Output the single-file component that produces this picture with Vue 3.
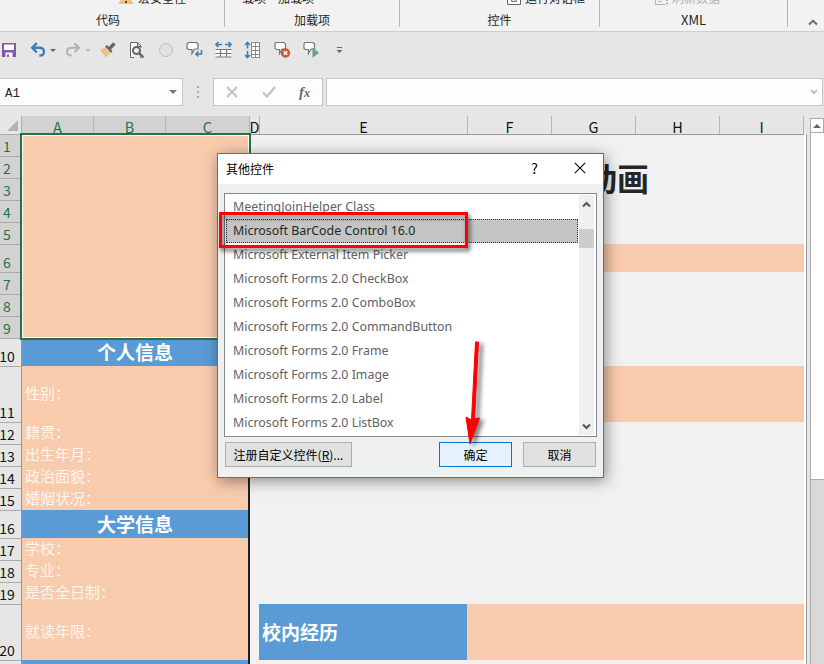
<template>
  <div class="excel">
    <div class="ribbon">
      <div class="group g-code">
        <div class="cmd-row">
          <svg width="16" height="16" viewBox="0 0 16 16"><path d="M8 1 15.500 15H.5z" fill="#ecc27c"/><path d="M7 6h2v5H7zM7 12h2v2H7z" fill="#444"/></svg>
          <span>宏安全性</span>
        </div>
        <div class="group-name">代码</div>
      </div>
      <div class="group g-addins">
        <div class="cmd-row"><span>载项</span><span>加载项</span></div>
        <div class="group-name">加载项</div>
      </div>
      <div class="group g-controls">
        <div class="cmd-row">
          <i class="tick"></i>
          <svg width="14" height="16" viewBox="0 0 14 16"><path d="M.5.5h13v15H.5z" fill="#fff" stroke="#666"/><path d="M4.500 7.500h5v5h-5z" fill="#ddd" stroke="#777"/></svg>
          <span>运行对话框</span>
        </div>
        <div class="group-name">控件</div>
      </div>
      <div class="group g-xml">
        <div class="cmd-row off">
          <svg width="14" height="16" viewBox="0 0 14 16"><path d="M10 15.500H.5V.5h10v9" fill="none" stroke="#b9b0b9"/><path d="M3 9.500h5M3 12.500h4" stroke="#c9a9c9"/><path d="M12 8v4M12 13.500v2" stroke="#b9b0b9" stroke-width="2"/></svg>
          <span>刷新数据</span>
        </div>
        <div class="group-name">XML</div>
      </div>
      <div class="collapse">
        <svg width="10" height="7" viewBox="0 0 10 7"><path d="M1 5.500 5 1.800 9 5.500" fill="none" stroke="#6a6a6a" stroke-width="2"/></svg>
      </div>
    </div>

    <div class="qat">
      <div class="tool save">
        <svg width="14" height="14" viewBox="0 0 14 14"><path d="M0 0h14v14H0z" fill="#8a53b0"/><path d="M2 1.500h10v5.500H2z" fill="#fff"/><path d="M3.500 9.500h7V14h-7z" fill="#fff"/><path d="M5 11.500h2V14H5z" fill="#8a53b0"/></svg>
      </div>
      <div class="tool undo">
        <svg width="16" height="16" viewBox="0 0 16 16"><path d="M2.500 5.800H9.500C12.500 5.800 14 7.500 14 9.700 14 12.300 11.800 13.500 9.300 13.500" fill="none" stroke="#3f7ebb" stroke-width="2.400"/><path d="M6.800 1.200 2.200 5.800 6.800 10.400" fill="none" stroke="#3f7ebb" stroke-width="2.400"/></svg>
        <i class="caret"></i>
      </div>
      <div class="tool redo">
        <svg width="16" height="16" viewBox="0 0 16 16"><path d="M13.500 5.800H6.500C3.500 5.800 2 7.500 2 9.700 2 12.300 4.200 13.500 6.700 13.500" fill="none" stroke="#b4b4b4" stroke-width="2"/><path d="M9.500 1.400 13.900 5.800 9.500 10.200" fill="none" stroke="#b4b4b4" stroke-width="2.200"/></svg>
        <i class="caret light"></i>
      </div>
      <div class="tool">
        <svg width="18" height="16" viewBox="0 0 18 16"><path d="M1 8 6 5.500 11 11 7 15.500z" fill="#ecc27c"/><path d="M6 4.500 8 3l5.500 6L12 11z" fill="#666"/><path d="M10.500 6.500 15.500 1.500" stroke="#666" stroke-width="3.200"/></svg>
      </div>
      <div class="tool">
        <svg width="16" height="18" viewBox="0 0 16 18"><path d="M5 16.500H1.500v-15h7l3.500 3.500v2M8.500 1.500v4H12M12 13v3.500H11" fill="#fff" stroke="#666"/><circle cx="7.500" cy="9.500" r="3.500" fill="#eee" stroke="#666" stroke-width="2"/><path d="M10 12 14.500 16.500" stroke="#666" stroke-width="2.400"/></svg>
      </div>
      <div class="tool">
        <svg width="16" height="16" viewBox="0 0 16 16"><circle cx="8" cy="8" r="6.500" fill="#e2dfe2" stroke="#c3bac3"/></svg>
      </div>
      <div class="tool">
        <svg width="17" height="18" viewBox="0 0 17 18"><path d="M2.500 1.500h8l1.500 1.500v5h-3.500L6 12.500V8.500H2.500L1 7.500V3z" fill="#fff" stroke="#707070" stroke-width="1.200"/><path d="M15.500 9v4H10M12.500 10.500 10 13l2.500 2.500" fill="none" stroke="#3f7ebb" stroke-width="1.600"/></svg>
      </div>
      <div class="tool">
        <svg width="17" height="18" viewBox="0 0 17 18"><path d="M1 3.500h6M10 3.500h6M3.500 1 1 3.500 3.500 6M13.500 1 16 3.500 13.500 6" fill="none" stroke="#3f7ebb" stroke-width="1.600"/><path d="M.5 8h16v8.500H.5z" fill="#fff"/><path d="M.5 8.500h16M.5 12.500h16M.5 16h16M5.500 8v8.500M11.500 8v8.500" stroke="#777" stroke-width="1.200"/></svg>
      </div>
      <div class="tool">
        <svg width="17" height="18" viewBox="0 0 17 18"><path d="M3.500 1.500v6M3.500 10v6.500M1 4 3.500 1.500 6 4M1 14 3.500 16.500 6 14" fill="none" stroke="#3f7ebb" stroke-width="1.600"/><path d="M7.500 1h8v15.500h-8z" fill="#fff"/><path d="M7.500 1v16M11.500 1v16M15.500 1v16M7.500 1.500h8M7.500 5.500h8M7.500 9.500h8M7.500 13.500h8M7.500 16.500h8" stroke="#8a8a8a"/></svg>
      </div>
      <div class="tool">
        <svg width="18" height="18" viewBox="0 0 18 18"><path d="M3 1.500h8l1.500 1.500v5H9L6.500 12.500V8.500H3.500L2 7.500V3z" fill="#fff" stroke="#777" stroke-width="1.200"/><circle cx="12.500" cy="12" r="4.700" fill="#d9532f"/><path d="m10.800 10.300 3.400 3.400m0-3.400-3.400 3.400" stroke="#fff" stroke-width="1.500"/></svg>
      </div>
      <div class="tool">
        <svg width="18" height="18" viewBox="0 0 18 18"><path d="M3 1.500h8l1.500 1.500v5H9L6.500 12.500V8.500H3.500L2 7.500V3z" fill="#fff" stroke="#777" stroke-width="1.200"/><path d="M10.500 6.500 17 11.800 10.500 17z" fill="#5fa58c"/></svg>
      </div>
      <div class="tool">
        <svg width="7" height="8" viewBox="0 0 7 8"><path d="M1 1.500h5" stroke="#666"/><path d="M.5 4h6L3.500 7z" fill="#666"/></svg>
      </div>
    </div>

    <div class="formula-bar">
      <div class="name-box"><span>A1</span><i class="caret big"></i></div>
      <div class="dots"><i></i><i></i><i></i></div>
      <div class="fx-box">
        <svg width="12" height="12" viewBox="0 0 12 12"><path d="m1 1 10 10M11 1 1 11" stroke="#c3c3c3" stroke-width="2"/></svg>
        <svg width="14" height="12" viewBox="0 0 14 12"><path d="m1 6.500 4 4L13 1" fill="none" stroke="#c3c3c3" stroke-width="2.400"/></svg>
        <span class="fx">f<small>x</small></span>
      </div>
      <div class="formula-input">
        <svg width="8" height="6" viewBox="0 0 8 6"><path d="m1 1 3 3.200L7 1" fill="none" stroke="#b9b9b9" stroke-width="1.800"/></svg>
      </div>
    </div>

    <div class="workbook">
      <div class="sheet-wrap">
        <div class="col-heads">
          <div class="corner"><i></i></div>
          <div v-for="c in cols" :key="c.name" class="col-head" :class="{ sel: c.sel }" :style="{ width: c.w + 'px' }">{{ c.name }}</div>
        </div>
        <div class="sheet">
          <div class="row-heads">
            <div v-for="(h, i) in rowHeights" :key="i" class="row-head" :class="{ sel: i < 9 }" :style="{ height: h + 'px' }"><span>{{ i + 1 }}</span></div>
          </div>
          <div class="resume-left">
            <div class="photo"></div>
            <template v-for="r in leftRows" :key="r.text">
              <div :class="r.head ? 'section' : 'field'" :style="{ height: r.h + 'px' }">{{ r.text }}</div>
            </template>
            <div class="section"></div>
            <div class="selection"></div>
          </div>
          <div class="resume-right">
            <h1>动画</h1>
            <div class="band b6"></div>
            <div class="band b11"></div>
            <div class="school">
              <div class="school-title">校内经历</div>
              <div class="school-body"></div>
            </div>
          </div>
        </div>
      </div>
      <div class="vscroll">
        <div class="up"><i></i></div>
        <div class="thumb"></div>
      </div>
    </div>

    <div class="dialog">
      <div class="dlg-title">
        <span>其他控件</span>
        <span class="help">?</span>
        <svg width="12" height="12" viewBox="0 0 12 12"><path d="m.8.8 10.400 10.400M11.200.8.8 11.200" stroke="#111" stroke-width="1.200"/></svg>
      </div>
      <div class="listbox">
        <div class="items">
          <div v-for="(it, i) in items" :key="it" class="item" :class="{ active: i === selected }" @click="selected = i">{{ it }}</div>
        </div>
        <div class="list-scroll">
          <svg width="9" height="7" viewBox="0 0 9 7"><path d="M1 5.500 4.500 2 8 5.500" fill="none" stroke="#555" stroke-width="2"/></svg>
          <div class="list-thumb"></div>
          <svg class="down" width="9" height="7" viewBox="0 0 9 7"><path d="M1 1.500 4.500 5 8 1.500" fill="none" stroke="#555" stroke-width="2"/></svg>
        </div>
      </div>
      <div class="dlg-actions">
        <button class="register">注册自定义控件(<u>R</u>)...</button>
        <button class="ok">确定</button>
        <button>取消</button>
      </div>
    </div>

    <div class="mark-box"></div>
    <svg class="mark-arrow" width="30" height="115" viewBox="0 0 30 115">
      <path d="M15.500 5 18.500 5 14.500 82 19.500 81 10 107 6 80 11.500 83z" fill="#f00" stroke="#f00" stroke-linejoin="round"/>
    </svg>
  </div>
</template>

<script setup>
import { ref } from 'vue'

const cols = [
  { name: 'A', w: 72, sel: true },
  { name: 'B', w: 72, sel: true },
  { name: 'C', w: 84, sel: true },
  { name: 'D', w: 10 },
  { name: 'E', w: 208 },
  { name: 'F', w: 84 },
  { name: 'G', w: 84 },
  { name: 'H', w: 84 },
  { name: 'I', w: 84 },
]
const rowHeights = [22, 22, 22, 22, 22, 28, 22, 22, 22, 28, 56, 22, 22, 22, 22, 28, 22, 22, 22, 56, 22]

const leftRows = [
  { text: '个人信息', h: 28, head: true },
  { text: '性别：', h: 56 },
  { text: '籍贯：', h: 22 },
  { text: '出生年月：', h: 22 },
  { text: '政治面貌：', h: 22 },
  { text: '婚姻状况：', h: 22 },
  { text: '大学信息', h: 28, head: true },
  { text: '学校：', h: 22 },
  { text: '专业：', h: 22 },
  { text: '是否全日制：', h: 22 },
  { text: '就读年限：', h: 56 },
]

const items = [
  'MeetingJoinHelper Class',
  'Microsoft BarCode Control 16.0',
  'Microsoft External Item Picker',
  'Microsoft Forms 2.0 CheckBox',
  'Microsoft Forms 2.0 ComboBox',
  'Microsoft Forms 2.0 CommandButton',
  'Microsoft Forms 2.0 Frame',
  'Microsoft Forms 2.0 Image',
  'Microsoft Forms 2.0 Label',
  'Microsoft Forms 2.0 ListBox',
]
const selected = ref(1)
</script>

<style>
body{margin:0;overflow:hidden}
</style>

<style scoped>
*{box-sizing:border-box}
.excel{position:relative;width:824px;height:664px;overflow:hidden;background:#e6e6e6;font-family:'Noto Sans CJK SC',sans-serif;font-size:12px;color:#262626;display:flex;flex-direction:column}
svg{display:block;flex:none}

/* ribbon */
.ribbon{height:32px;flex:none;display:flex;background:#f2f2f2;border-bottom:1px solid #cfcfcf}
.group{height:27px;border-right:1px solid #b5b5b5;display:flex;flex-direction:column;justify-content:flex-end}
.g-code{width:225px}
.g-addins{width:175px}
.g-controls{width:200px}
.g-xml{width:188px}
.cmd-row{display:flex;align-items:flex-end;height:16px;flex:none;line-height:16px;white-space:nowrap}
.cmd-row.off{color:#b3b3b3}
.g-code .cmd-row{padding-left:118px;gap:4px}
.g-addins .cmd-row{padding-left:17px;gap:12px}
.g-controls .cmd-row{padding-left:107px;gap:4px}
.g-xml .cmd-row{padding-left:55px;gap:3px}
.cmd-row svg{margin-bottom:1px}
.tick{display:none}
.group-name{height:21px;flex:none;line-height:14px;padding-top:7px;text-align:center}
.g-code .group-name{padding-right:8px}
.g-xml .group-name{font-size:13px}
.collapse{flex:1;display:flex;justify-content:center;padding:19px 0 0 14px}

/* quick access toolbar */
.qat{height:46px;flex:none;display:flex;align-items:center;padding-bottom:10px}
.tool{width:29px;display:flex;align-items:center;justify-content:center}
.tool.save{width:30px;justify-content:flex-start;padding-left:2px}
.tool.undo{width:35px;justify-content:flex-start;gap:4px}
.tool.redo{width:28px;justify-content:flex-start;gap:4px}
.caret{border:3px solid transparent;border-top-color:#666;border-bottom:0}
.caret.light{border-top-color:#bbb}
.caret.big{border-width:4px 4px 0;border-top-color:#777}

/* formula bar */
.formula-bar{height:28px;flex:none;display:flex}
.name-box,.fx-box,.formula-input{background:#fdfdfd;border:1px solid #c6c6c6;display:flex;align-items:center}
.name-box{width:183px;border-left:0;justify-content:space-between;padding:0 5px;font-family:'Liberation Mono','Noto Sans CJK SC',monospace;font-size:12.500px}
.name-box span{padding-top:3px}
.dots{width:30px;display:flex;flex-direction:column;align-items:center;justify-content:center;gap:3px}
.dots i{width:2px;height:2px;background:#aaa}
.fx-box{width:110px;padding:0 12px;justify-content:space-between}
.fx{font-family:'Liberation Serif',serif;font-style:italic;font-weight:700;font-size:15px;line-height:16px;color:#666}
.fx small{font-size:12px}
.formula-input{width:497px;margin-left:3px;justify-content:flex-end;padding-right:4px}

/* sheet */
.workbook{flex:1;display:flex;padding-top:10px;min-height:0}
.sheet-wrap{width:807px;display:flex;flex-direction:column}
.col-heads{height:18px;flex:none;display:flex}
.corner{width:22px;border-right:1px solid #ababab;display:flex;justify-content:flex-end;align-items:flex-end;padding:0 3px 3px 0}
.corner i{border-left:11px solid transparent;border-bottom:11px solid #b3b3b3}
.col-head{flex:none;display:flex;justify-content:center;font-size:14.500px;line-height:21px;color:#111;border-right:1px solid #b5b5b5}
.col-head.sel{background:#d2d2d2;color:#217346}
.sheet{flex:1;display:flex;min-height:0;background:#f1f1f1;border-top:1px solid #999;border-right:1px solid #999}
.row-heads{width:22px;flex:none;margin-top:-1px;background:#e6e6e6;border-right:1px solid #999}
.row-head{border-top:1px solid #ababab;display:flex;align-items:flex-end;justify-content:center;padding:0 7px 2px 0;color:#111;font-size:14px}
.row-head span{line-height:15px}
.row-head.sel{background:#d2d2d2;color:#217346}
.resume-left{position:relative;width:228px;flex:none;margin-top:-1px;background:#f8cbad;border-right:2px solid #1f1f1f}
.photo{height:204px}
.section{height:28px;background:#5b9bd5;color:#fff;font-size:19px;font-weight:700;display:flex;align-items:center;justify-content:center;padding-bottom:2px}
.field{display:flex;align-items:center;padding:0 0 3px 3px;font-size:15px;color:#fff5ee}
.selection{position:absolute;left:-2px;top:-1px;width:231px;height:207px;border:2px solid #217346;box-shadow:inset 0 0 0 1px #fff}
.resume-right{flex:1;margin:-1px 0 0 9px;border-right:2px solid #fff}
h1{margin:0;height:110px;padding:20px 0 0 326px;font-size:32px;line-height:46px;font-weight:700;color:#262626}
.band{background:#f8cbad}
.b6{height:28px;margin-bottom:94px}
.b11{height:56px;margin-bottom:182px}
.school{display:flex;height:56px}
.school-title{width:208px;background:#5b9bd5;color:#fff;font-size:19px;font-weight:700;display:flex;align-items:center;padding:0 0 2px 3px}
.school-body{flex:1;background:#f8cbad}
.vscroll{width:14px;margin-left:3px;margin-top:2px;background:#d9d9d9;border-left:1px solid #ababab}
.up{height:15px;background:#fff;border:1px solid #ababab;border-left:0;display:flex;align-items:center;justify-content:center}
.up i{border:4px solid transparent;border-bottom-color:#666;border-top:0}
.thumb{height:347px;background:#fff;border-bottom:1px solid #ababab}

/* dialog */
.dialog{position:absolute;left:217px;top:153px;width:387px;height:325px;background:#f0f0f0;border:1px solid #2a7fc4;box-shadow:2px 3px 14px rgba(0,0,0,.42);color:#000}
.dlg-title{height:30px;background:#fff;display:flex;align-items:center;padding:0 17px 2px 8px}
.dlg-title span:first-child{flex:1}
.help{font-size:14px;margin-right:36px}
.listbox{margin:9px 6px 0;height:244px;border:1px solid #828790;background:#fff;display:flex;padding:1px 0 1px 1px}
.items{flex:1;padding-right:1px}
.item{height:24px;padding-left:6px;border:1px solid transparent;font-family:'Noto Sans','Noto Sans CJK SC',sans-serif;font-size:12.400px;color:#626262;line-height:22px;white-space:nowrap}
.item.active{background:#c4c4c4;border:1px dotted #333;color:#262626}
.list-scroll{width:17px;border-right:2px solid #fff;background:#f0f0f0;display:flex;flex-direction:column;align-items:center;padding:6px 0 5px}
.list-thumb{width:100%;height:19px;background:#cdcdcd;margin-top:21px}
.down{margin-top:auto}
.dlg-actions{display:flex;padding:5px 7px 0}
button{width:73px;height:25px;padding:0 0 1px;border:1px solid #adadad;background:#e1e1e1;font:12px 'Noto Sans CJK SC',sans-serif;color:#000}
.register{width:127px}
.ok{margin:0 11px 0 87px;border-color:#0078d7;background:#e5f1fb}

/* annotations */
.mark-box{position:absolute;left:219px;top:212px;width:249px;height:36px;border:3px solid #f00;filter:drop-shadow(2px 3px 2px rgba(0,0,0,.65))}
.mark-arrow{position:absolute;left:460px;top:337px;filter:drop-shadow(4px 2px 2px rgba(0,0,0,.5))}
</style>
